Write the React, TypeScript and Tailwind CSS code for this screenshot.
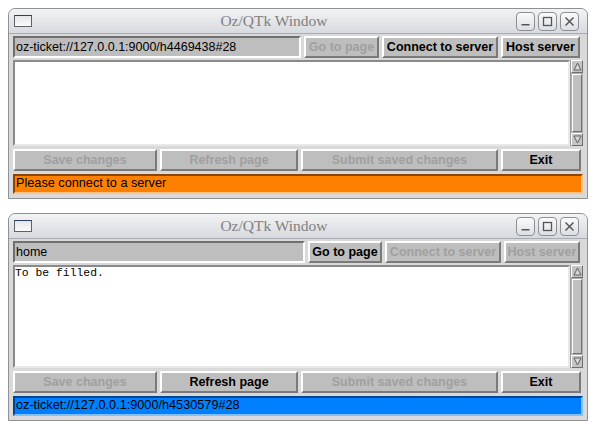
import React from "react";

const sans = { fontFamily: '"Liberation Sans", Arial, sans-serif' };

function TitleBar() {
  return (
    <div className="relative h-[25px] flex items-center rounded-t-[6px] bg-gradient-to-b from-[#f2f3f5] to-[#d7dade] border-b border-[#a9acb1]">
      <div className="ml-[5px] w-[18px] h-[12px] border border-[#5e6166] border-t-[#2c3d66] bg-gradient-to-b from-[#e4e6ea] to-[#fbfbfb]" />
      <div
        className="flex-1 text-center text-[15.5px] text-[#808080]"
        style={{ fontFamily: '"Liberation Serif", "Times New Roman", serif' }}
      >
        Oz/QTk Window
      </div>
      <div className="flex gap-[3px] mr-[8px]">
        {["min", "max", "close"].map((k) => (
          <div
            key={k}
            className="w-[19px] h-[19px] rounded-[4px] border border-[#8c8f94] bg-gradient-to-b from-[#fbfbfc] to-[#dcdfe3] flex items-center justify-center"
          >
            <svg width="11" height="11" viewBox="0 0 11 11">
              {k === "min" && <rect x="1.5" y="8" width="8" height="1.5" fill="#555" />}
              {k === "max" && <rect x="1.5" y="1.5" width="8" height="8" fill="none" stroke="#555" strokeWidth="1.3" />}
              {k === "close" && (
                <path d="M1.5 1.5 L9.5 9.5 M9.5 1.5 L1.5 9.5" stroke="#555" strokeWidth="1.5" />
              )}
            </svg>
          </div>
        ))}
      </div>
    </div>
  );
}

function Btn({ label, w, enabled }: { label: string; w: number; enabled: boolean }) {
  return (
    <div
      className={
        "h-full flex items-center justify-center bg-[#bebebe] border-2 border-t-white border-l-white border-b-[#7a7a7a] border-r-[#7a7a7a] text-[12.5px] font-bold whitespace-nowrap " +
        (enabled ? "text-black" : "text-[#a0a0a0]")
      }
      style={{ ...sans, width: w }}
    >
      {label}
    </div>
  );
}

function Scrollbar() {
  return (
    <div className="w-[13px] h-full flex flex-col bg-[#b0b0b0] border-l border-[#9a9a9a]">
      <div className="h-[13px] flex items-center justify-center bg-[#c4c4c4] border border-t-white border-l-white border-b-[#707070] border-r-[#707070]">
        <svg width="9" height="9" viewBox="0 0 9 9">
          <path d="M4.5 1 L8 8 L1 8 Z" fill="#d8d8d8" stroke="#606060" strokeWidth="1" />
        </svg>
      </div>
      <div className="flex-1 my-[1px] mx-[1px] bg-[#c0c0c0] border border-t-white border-l-white border-b-[#707070] border-r-[#707070]" />
      <div className="h-[13px] flex items-center justify-center bg-[#c4c4c4] border border-t-white border-l-white border-b-[#707070] border-r-[#707070]">
        <svg width="9" height="9" viewBox="0 0 9 9">
          <path d="M1 1 L8 1 L4.5 8 Z" fill="#d8d8d8" stroke="#606060" strokeWidth="1" />
        </svg>
      </div>
    </div>
  );
}

function Win({
  entry,
  topW,
  topEnabled,
  textH,
  content,
  bottomEnabled,
  status,
  statusClass,
}: {
  entry: string;
  topW: number[];
  topEnabled: boolean[];
  textH: number;
  content: string;
  bottomEnabled: boolean[];
  status: string;
  statusClass: string;
}) {
  return (
    <div className="w-[580px] ml-[8px] border border-[#8e9196] rounded-t-[7px] bg-[#d9d9d9] flex flex-col">
      <TitleBar />
      <div className="flex flex-col px-[4px] pt-[2px] pb-[4px]">
        <div className="h-[22px] flex gap-[3px]">
          <div
            className="h-full flex items-center bg-[#bebebe] border-2 border-t-[#6f6f6f] border-l-[#6f6f6f] border-b-white border-r-white text-[12.5px] text-black pl-[1px]"
            style={{ ...sans, width: topW[0] }}
          >
            {entry}
          </div>
          <Btn label="Go to page" w={topW[1]} enabled={topEnabled[0]} />
          <Btn label="Connect to server" w={topW[2]} enabled={topEnabled[1]} />
          <Btn label="Host server" w={topW[3]} enabled={topEnabled[2]} />
        </div>
        <div className="flex mt-[2px]" style={{ height: textH }}>
          <div
            className="flex-1 bg-white border-2 border-t-[#8a8a8a] border-l-[#8a8a8a] border-b-[#e8e8e8] border-r-[#e8e8e8] text-[11.4px] text-black leading-[13px]"
            style={{ fontFamily: '"Liberation Mono", "Courier New", monospace' }}
          >
            {content}
          </div>
          <Scrollbar />
        </div>
        <div className="h-[22px] flex gap-[3px] mt-[3px]">
          <Btn label="Save changes" w={144} enabled={bottomEnabled[0]} />
          <Btn label="Refresh page" w={138} enabled={bottomEnabled[1]} />
          <Btn label="Submit saved changes" w={197} enabled={bottomEnabled[2]} />
          <Btn label="Exit" w={80} enabled={bottomEnabled[3]} />
        </div>
        <div
          className={"h-[20px] mt-[3px] flex items-center text-[12.7px] text-black pl-[1px] border-2 " + statusClass}
          style={sans}
        >
          {status}
        </div>
      </div>
    </div>
  );
}

export default function App() {
  return (
    <div className="w-[596px] h-[429px] bg-white pt-[8px] flex flex-col gap-[14px]">
      <Win
        entry="oz-ticket://127.0.0.1:9000/h4469438#28"
        topW={[288, 75, 116, 79]}
        topEnabled={[false, true, true]}
        textH={86}
        content=""
        bottomEnabled={[false, false, false, true]}
        status="Please connect to a server"
        statusClass="bg-[#ff8000] border-t-[#8a4500] border-l-[#8a4500] border-b-[#ffc080] border-r-[#ffc080]"
      />
      <Win
        entry="home"
        topW={[292, 74, 116, 76]}
        topEnabled={[true, false, false]}
        textH={103}
        content="To be filled."
        bottomEnabled={[false, true, false, true]}
        status="oz-ticket://127.0.0.1:9000/h4530579#28"
        statusClass="bg-[#0080ff] border-t-[#004590] border-l-[#004590] border-b-[#80c0ff] border-r-[#80c0ff]"
      />
    </div>
  );
}
